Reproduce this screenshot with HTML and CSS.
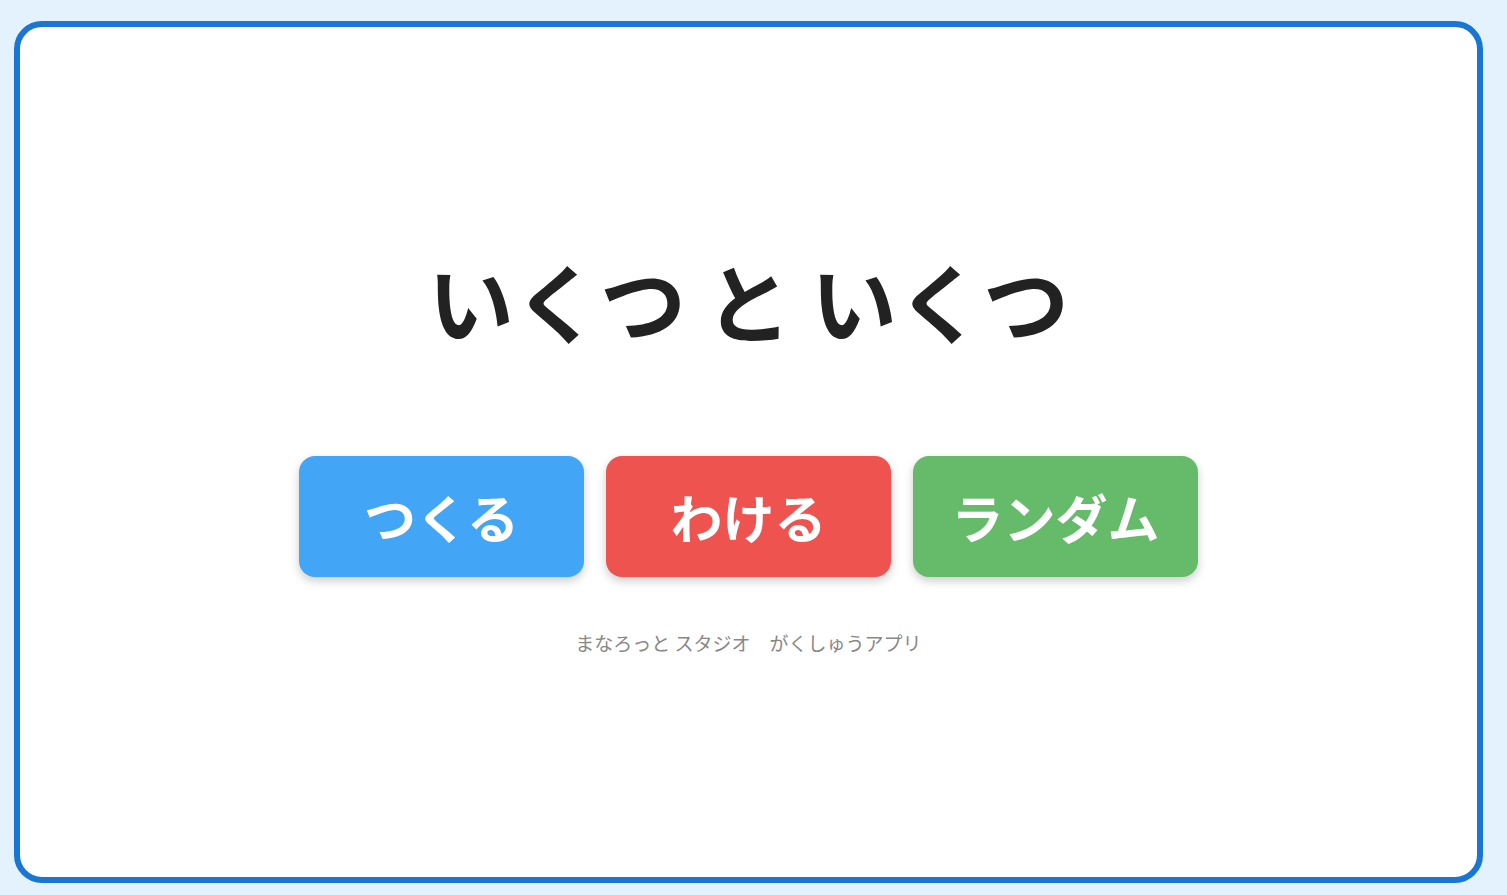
FILE: index.html
```html
<!DOCTYPE html>
<html lang="ja">
<head>
<meta charset="utf-8">
<title>いくつ と いくつ</title>
<link rel="stylesheet" href="styles.css">
</head>
<body>
<main class="card">
  <h1 class="title">いくつ と いくつ</h1>
  <div class="buttons">
    <button class="btn btn-blue">つくる</button>
    <button class="btn btn-red">わける</button>
    <button class="btn btn-green">ランダム</button>
  </div>
  <p class="footer">まなろっと スタジオ　がくしゅうアプリ</p>
</main>
</body>
</html>
```

FILE: styles.css
```css
html, body {
  margin: 0;
  height: 100%;
}
body {
  background: #e3f2fd;
  box-sizing: border-box;
  padding: 21px 24px 12px 14px;
  font-family: "Noto Sans CJK JP", "Noto Sans", sans-serif;
}
.card {
  box-sizing: border-box;
  height: 100%;
  padding-bottom: 4px;
  background: #ffffff;
  border: 6px solid #1976d2;
  border-radius: 28px;
  display: flex;
  flex-direction: column;
  align-items: center;
  justify-content: center;
}
.title {
  margin: 0 0 100px;
  font-size: 86px;
  font-weight: 700;
  line-height: 1.3;
  color: #222222;
}
.buttons {
  display: flex;
  gap: 22px;
}
.btn {
  width: 285px;
  height: 121px;
  border: none;
  border-radius: 16px;
  color: #ffffff;
  font-family: inherit;
  font-size: 52px;
  font-weight: 700;
  box-shadow: 0 4px 10px rgba(0, 0, 0, 0.2);
}
.btn-blue { background: #42a5f5; }
.btn-red { background: #ef5350; }
.btn-green { background: #66bb6a; }
.footer {
  margin: 52px 0 0;
  font-size: 19px;
  color: #888888;
}
```
